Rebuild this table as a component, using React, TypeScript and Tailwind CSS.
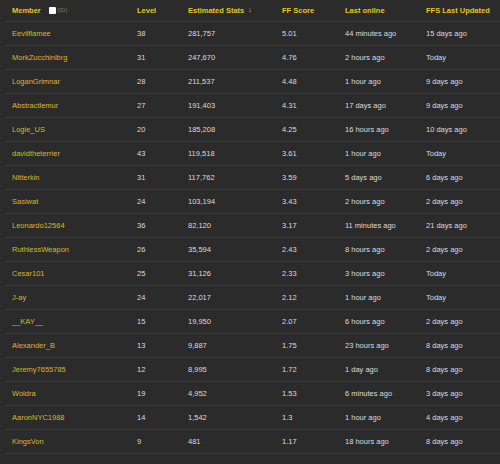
import React from "react";

const rows: [string, string, string, string, string, string][] = [
  ["Eevilflamee", "38", "281,757", "5.01", "44 minutes ago", "15 days ago"],
  ["MorkZucchinibrg", "31", "247,670", "4.76", "2 hours ago", "Today"],
  ["LoganGrimnar", "28", "211,537", "4.48", "1 hour ago", "9 days ago"],
  ["Abstractlemur", "27", "191,403", "4.31", "17 days ago", "9 days ago"],
  ["Logie_US", "20", "185,208", "4.25", "16 hours ago", "10 days ago"],
  ["davidtheterrier", "43", "119,518", "3.61", "1 hour ago", "Today"],
  ["Nitterkin", "31", "117,762", "3.59", "5 days ago", "6 days ago"],
  ["Sasiwat", "24", "103,194", "3.43", "2 hours ago", "2 days ago"],
  ["Leonardo12564", "36", "82,120", "3.17", "11 minutes ago", "21 days ago"],
  ["RuthlessWeapon", "26", "35,594", "2.43", "8 hours ago", "2 days ago"],
  ["Cesar101", "25", "31,126", "2.33", "3 hours ago", "Today"],
  ["J-ay", "24", "22,017", "2.12", "1 hour ago", "Today"],
  ["__KAY__", "15", "19,950", "2.07", "6 hours ago", "2 days ago"],
  ["Alexander_B", "13", "9,887", "1.75", "23 hours ago", "8 days ago"],
  ["Jeremy7655785", "12", "8,995", "1.72", "1 day ago", "8 days ago"],
  ["Woldra", "19", "4,952", "1.53", "6 minutes ago", "3 days ago"],
  ["AaronNYC1988", "14", "1,542", "1.3", "1 hour ago", "4 days ago"],
  ["KingsVon", "9", "481", "1.17", "18 hours ago", "8 days ago"],
];

const cols = "grid grid-cols-[125px_51px_94px_63px_81px_80px]";

export default function App() {
  return (
    <div
      className="w-[500px] h-[464px] bg-[#2b2b2b] overflow-hidden pl-[6px]"
      style={{ fontFamily: '"Liberation Sans", Arial, sans-serif' }}
    >
      <div className={`${cols} h-[22px] items-center border-b border-[#3c3c3c] text-[7.5px] font-bold text-[#e8c41c]`}>
        <div className="pl-[6px] flex items-center">
          <span>Member</span>
          <span className="ml-[8px] inline-block w-[7px] h-[7px] bg-white rounded-[1px]" />
          <span className="ml-[2px] text-[6px] font-normal text-[#777]">[ID]</span>
        </div>
        <div className="pl-[6px]">Level</div>
        <div className="pl-[6px] flex items-center">
          <span>Estimated Stats</span>
          <span className="ml-[4px] text-[7px]">↓</span>
        </div>
        <div className="pl-[6px]">FF Score</div>
        <div className="pl-[6px]">Last online</div>
        <div className="pl-[6px] whitespace-nowrap">FFS Last Updated</div>
      </div>
      {rows.map((r) => (
        <div
          key={r[0]}
          className={`${cols} h-[24px] items-center border-b border-[#3c3c3c] text-[7.5px] text-[#dcdcdc]`}
        >
          <div className="pl-[6px] text-[#d9b820] font-medium">{r[0]}</div>
          <div className="pl-[6px]">{r[1]}</div>
          <div className="pl-[6px]">{r[2]}</div>
          <div className="pl-[6px]">{r[3]}</div>
          <div className="pl-[6px]">{r[4]}</div>
          <div className="pl-[6px]">{r[5]}</div>
        </div>
      ))}
    </div>
  );
}
